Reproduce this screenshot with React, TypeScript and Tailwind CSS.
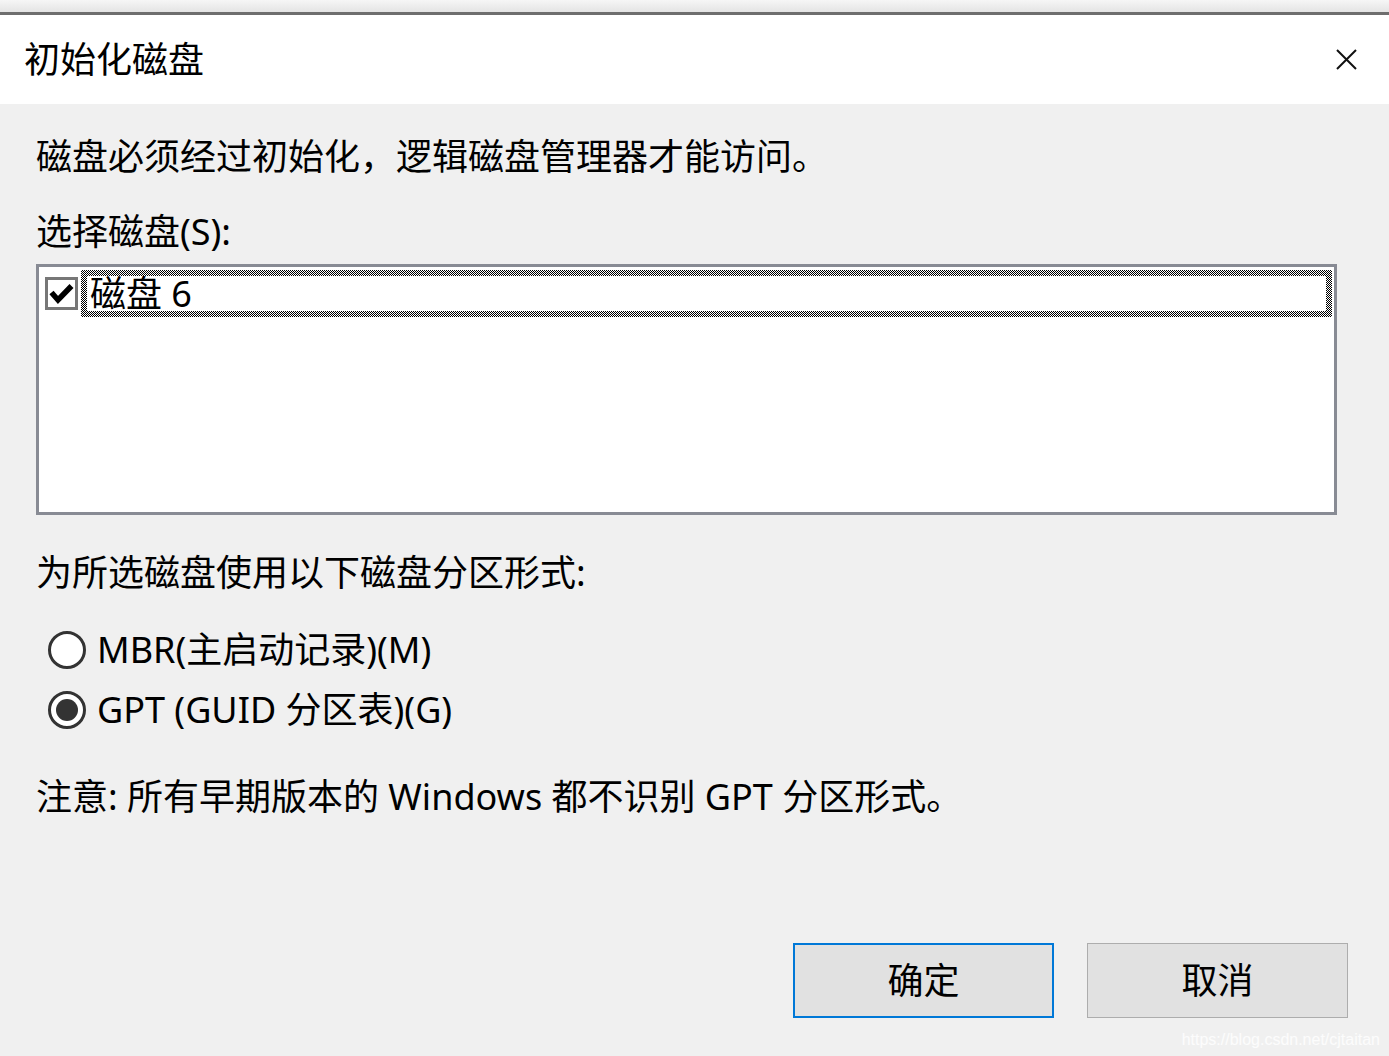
import React from 'react';

const CloseIcon = () => (
  <svg width="21" height="21" viewBox="0 0 21 21">
    <path d="M1 1 L20 20 M20 1 L1 20" stroke="#111" strokeWidth="2" fill="none" />
  </svg>
);

const CheckMark = () => (
  <svg width="27" height="27" viewBox="0 0 27 27">
    <path d="M3.5 12.5 L10 20 L23.5 6" stroke="#000" strokeWidth="5.5" fill="none" strokeLinejoin="miter" />
  </svg>
);

const Radio = ({ checked }: { checked?: boolean }) => (
  <div className="w-[38px] h-[38px] rounded-full border-[3px] border-[#333] bg-white flex items-center justify-center">
    {checked && <div className="w-[22px] h-[22px] rounded-full bg-[#333]" />}
  </div>
);

export default function App() {
  return (
    <div className="relative w-[1389px] h-[1056px] overflow-hidden bg-[#f0f0f0] text-black font-['Noto_Sans','Noto_Sans_CJK_SC',sans-serif]">
      {/* window edge */}
      <div className="h-[12px] bg-gradient-to-b from-[#f6f6f6] to-[#e4e4e4]" />
      <div className="h-[3px] bg-[#6e6e6e]" />

      {/* title bar */}
      <div className="h-[89px] bg-white flex items-center justify-between pl-[24px] pr-[32px]">
        <span className="text-[36px] leading-none">初始化磁盘</span>
        <CloseIcon />
      </div>

      {/* body */}
      <div className="px-[36px] pt-[29px]">
        <p className="text-[36px] leading-[48px]">磁盘必须经过初始化，逻辑磁盘管理器才能访问。</p>
        <p className="mt-[27px] text-[36px] leading-[48px]">选择磁盘(S):</p>

        <div className="mt-[8px] w-[1301px] h-[251px] border-[3px] border-[#888b94] bg-white">
          <div className="mt-[3px] ml-[6px] mr-[2px] flex items-center">
            <div className="w-[33px] h-[33px] border-[3px] border-[#777] bg-white flex items-center justify-center">
              <CheckMark />
            </div>
            <div className="ml-[3px] flex-1 h-[47px] p-[6px] bg-[repeating-conic-gradient(#000_0%_25%,#fff_0%_50%)] bg-[length:2px_2px]">
              <div className="h-full bg-white flex items-center pl-[3px]">
                <span className="text-[36px] leading-none">磁盘 6</span>
              </div>
            </div>
          </div>
        </div>

        <p className="mt-[34px] text-[36px] leading-[48px]">为所选磁盘使用以下磁盘分区形式:</p>

        <div className="mt-[23px] pl-[12px]">
          <div className="h-[60px] flex items-center gap-[11px]">
            <Radio />
            <span className="text-[36px] leading-none">MBR(主启动记录)(M)</span>
          </div>
          <div className="h-[60px] flex items-center gap-[11px]">
            <Radio checked />
            <span className="text-[36px] leading-none">GPT (GUID 分区表)(G)</span>
          </div>
        </div>

        <p className="mt-[33px] text-[36px] leading-[48px]">注意: 所有早期版本的 Windows 都不识别 GPT 分区形式。</p>
      </div>

      {/* buttons */}
      <div className="mt-[122px] pr-[41px] flex justify-end gap-[33px]">
        <button className="w-[261px] h-[75px] bg-[#e1e1e1] border-2 border-[#0078d7] text-[36px] leading-none">确定</button>
        <button className="w-[261px] h-[75px] bg-[#e1e1e1] border border-[#adadad] text-[36px] leading-none">取消</button>
      </div>

      <span className="absolute right-[9px] bottom-[8px] text-[16px] leading-none text-white/80 font-['Liberation_Sans',sans-serif]">https://blog.csdn.net/cjtaitan</span>
    </div>
  );
}
